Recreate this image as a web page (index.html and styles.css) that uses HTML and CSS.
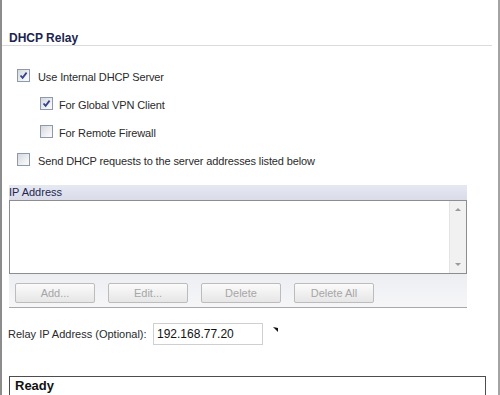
FILE: index.html
```html
<!DOCTYPE html>
<html lang="en">
<head>
    <meta charset="UTF-8">
    <title>DHCP Relay</title>
    <link rel="stylesheet" href="styles.css">
</head>
<body>
    <div class="panel">
        <h2 class="title">DHCP Relay</h2>

        <!-- OPTIONS -->
        <div class="options">
            <div class="row">
                <span class="cb checked"><svg viewBox="0 0 11 11"><path d="M2.5 5.5 L4.6 7.8 L8.6 2.6"/></svg></span>
                <span class="label">Use Internal DHCP Server</span>
            </div>
            <div class="row sub">
                <span class="cb checked"><svg viewBox="0 0 11 11"><path d="M2.5 5.5 L4.6 7.8 L8.6 2.6"/></svg></span>
                <span class="label">For Global VPN Client</span>
            </div>
            <div class="row sub">
                <span class="cb"></span>
                <span class="label">For Remote Firewall</span>
            </div>
            <div class="row">
                <span class="cb"></span>
                <span class="label">Send DHCP requests to the server addresses listed below</span>
            </div>
        </div>

        <!-- IP ADDRESS LIST -->
        <div class="list">
            <div class="list-head">IP Address</div>
            <div class="list-body">
                <div class="scroll">
                    <span class="arrow up"></span>
                    <span class="arrow down"></span>
                </div>
            </div>
            <div class="list-buttons">
                <button class="btn" disabled>Add...</button>
                <button class="btn" disabled>Edit...</button>
                <button class="btn" disabled>Delete</button>
                <button class="btn" disabled>Delete All</button>
            </div>
        </div>

        <div class="relay">
            <span class="relay-label">Relay IP Address (Optional):</span>
            <input type="text" class="relay-input" value="192.168.77.20">
            <svg class="mark" viewBox="0 0 5 5"><polygon points="0,0 5,1 5,5"/></svg>
        </div>

        <div class="status">Ready</div>
    </div>
</body>
</html>
```

FILE: styles.css
```css
body {
    margin: 0;
    background: #fff;
    font-family: "Liberation Sans", Arial, sans-serif;
    font-size: 11px;
    color: #2a2a2a;
}
.panel {
    width: 500px;
    height: 395px;
    box-sizing: border-box;
    border-left: 2px solid #8c8c8c;
    border-right: 2px solid #a3a3a3;
    padding-top: 31px;
    overflow: hidden;
}
.title {
    margin: 0 6px 0 0;
    padding: 0 0 0 7px;
    font-size: 12px;
    line-height: 14px;
    font-weight: bold;
    color: #1b2550;
    border-bottom: 1px solid #dadada;
}
.options {
    margin-top: 23px;
}
.row {
    display: flex;
    align-items: flex-start;
    height: 13px;
    margin-bottom: 15px;
    padding-left: 15px;
}
.row .label {
    margin-left: 8px;
    padding-top: 2px;
    line-height: 13px;
    letter-spacing: -0.12px;
}
.row.sub {
    padding-left: 38px;
}
.row.sub .label {
    margin-left: 6px;
}
.cb {
    width: 13px;
    height: 13px;
    box-sizing: border-box;
    border: 1px solid #8e99ad;
    background: linear-gradient(135deg, #d6d8de, #f7f7f8 80%);
    flex: none;
}
.cb svg {
    display: block;
    width: 11px;
    height: 11px;
}
.cb path {
    fill: none;
    stroke: #34438a;
    stroke-width: 1.8;
}
.list {
    margin: 19px 0 0 7px;
    width: 458px;
}
.list-head {
    height: 15px;
    line-height: 15px;
    background: linear-gradient(#e6e8f1, #d9dce9);
    color: #1d2750;
}
.list-body {
    height: 74px;
    box-sizing: border-box;
    border: 1px solid #8d8d8d;
    display: flex;
    justify-content: flex-end;
    background: #fff;
}
.scroll {
    width: 16px;
    background: #f1f1f1;
    border-left: 1px solid #e4e4e4;
    position: relative;
}
.arrow {
    position: absolute;
    left: 5px;
    width: 0;
    height: 0;
    border-left: 3px solid transparent;
    border-right: 3px solid transparent;
}
.arrow.up {
    top: 7px;
    border-bottom: 3px solid #9a9a9a;
}
.arrow.down {
    bottom: 7px;
    border-top: 3px solid #9a9a9a;
}
.list-buttons {
    height: 34px;
    box-sizing: border-box;
    padding: 9px 0 0 6px;
    background: linear-gradient(#eceef2, #f6f6f8);
    border-bottom: 1px solid #a8a8a8;
    display: flex;
    gap: 13px;
}
.btn {
    width: 80px;
    height: 20px;
    padding: 0;
    border: 1px solid #bcbcbc;
    border-radius: 2px;
    background: linear-gradient(#fbfbfb, #e6e6e6);
    font-family: "Liberation Sans", Arial, sans-serif;
    font-size: 11px;
    color: #a6a6a6;
}
.relay {
    display: flex;
    align-items: center;
    margin-top: 15px;
    padding-left: 6px;
}
.relay-label {
    width: 145px;
}
.relay-input {
    width: 110px;
    height: 22px;
    box-sizing: border-box;
    margin: 0;
    padding: 0 0 0 3px;
    border: 1px solid #cfcfcf;
    font-family: "Liberation Sans", Arial, sans-serif;
    font-size: 12px;
    color: #111;
}
.mark {
    align-self: flex-start;
    width: 5px;
    height: 5px;
    margin: 4px 0 0 10px;
    fill: #111;
}
.status {
    margin: 31px 0 0 7px;
    width: 477px;
    height: 30px;
    box-sizing: border-box;
    border: 1px solid #4d4d4d;
    padding: 1px 0 0 5px;
    font-size: 13px;
    font-weight: bold;
    color: #111;
}
```
